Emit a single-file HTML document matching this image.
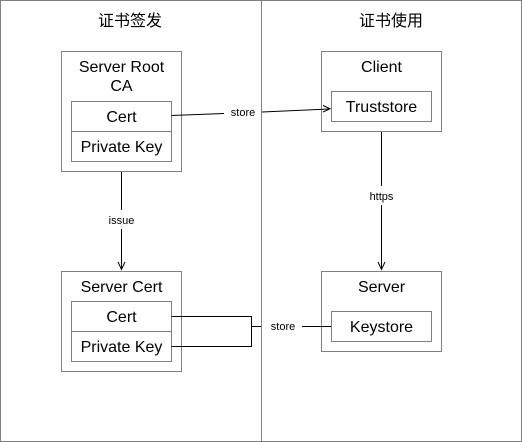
<!DOCTYPE html>
<html><head><meta charset="utf-8"><style>
html,body{margin:0;padding:0;background:#fff;}
svg{display:block;}
text{font-family:"Liberation Sans","Noto Sans CJK SC",sans-serif;fill:#000;}
</style></head><body>
<svg width="522" height="442" viewBox="0 0 522 442">
<rect x="0" y="0" width="522" height="442" fill="#fff"/>
<g fill="none" stroke="#808080" stroke-width="1">
<rect x="0.5" y="0.5" width="521" height="441"/>
<line x1="261.5" y1="0" x2="261.5" y2="442"/>
<rect x="61.5" y="51.5" width="120" height="120"/>
<rect x="71.5" y="101.5" width="100" height="30"/>
<rect x="71.5" y="131.5" width="100" height="30"/>
<rect x="61.5" y="271.5" width="120" height="100"/>
<rect x="71.5" y="301.5" width="100" height="30"/>
<rect x="71.5" y="331.5" width="100" height="30"/>
<rect x="321.5" y="51.5" width="120" height="80"/>
<rect x="331.5" y="91.5" width="100" height="30"/>
<rect x="321.5" y="271.5" width="120" height="80"/>
<rect x="331.5" y="311.5" width="100" height="30"/>
</g>
<g fill="none" stroke="#000" stroke-width="1">
<line x1="171.5" y1="115.5" x2="224" y2="113.5"/>
<line x1="262" y1="112" x2="329" y2="109"/>
<path d="M323,105.5 L330,108.8 L323,112"/>
<line x1="121.5" y1="172" x2="121.5" y2="210"/>
<line x1="121.5" y1="229" x2="121.5" y2="269"/>
<path d="M118,262 L121.5,269.5 L125,262"/>
<line x1="381.5" y1="132" x2="381.5" y2="186"/>
<line x1="381.5" y1="205" x2="381.5" y2="269"/>
<path d="M378,262 L381.5,269.5 L385,262"/>
<path d="M171.5,316.5 H251.5 V346.5 H171.5"/>
<line x1="251.5" y1="326.5" x2="261" y2="326.5"/>
<line x1="302" y1="326.5" x2="331" y2="326.5"/>
</g>
<g font-size="16" text-anchor="middle">
<text x="130" y="26">证书签发</text>
<text x="391" y="26">证书使用</text>
<text x="121.5" y="72">Server Root</text>
<text x="121.5" y="91">CA</text>
<text x="121.5" y="122">Cert</text>
<text x="121.5" y="152">Private Key</text>
<text x="121.5" y="292">Server Cert</text>
<text x="121.5" y="322">Cert</text>
<text x="121.5" y="352">Private Key</text>
<text x="381.5" y="72">Client</text>
<text x="381.5" y="112">Truststore</text>
<text x="381.5" y="292">Server</text>
<text x="381.5" y="332">Keystore</text>
</g>
<g font-size="11" text-anchor="middle">
<text x="243" y="116">store</text>
<text x="121.5" y="224">issue</text>
<text x="381.5" y="200">https</text>
<text x="283" y="330">store</text>
</g>
</svg>
</body></html>
